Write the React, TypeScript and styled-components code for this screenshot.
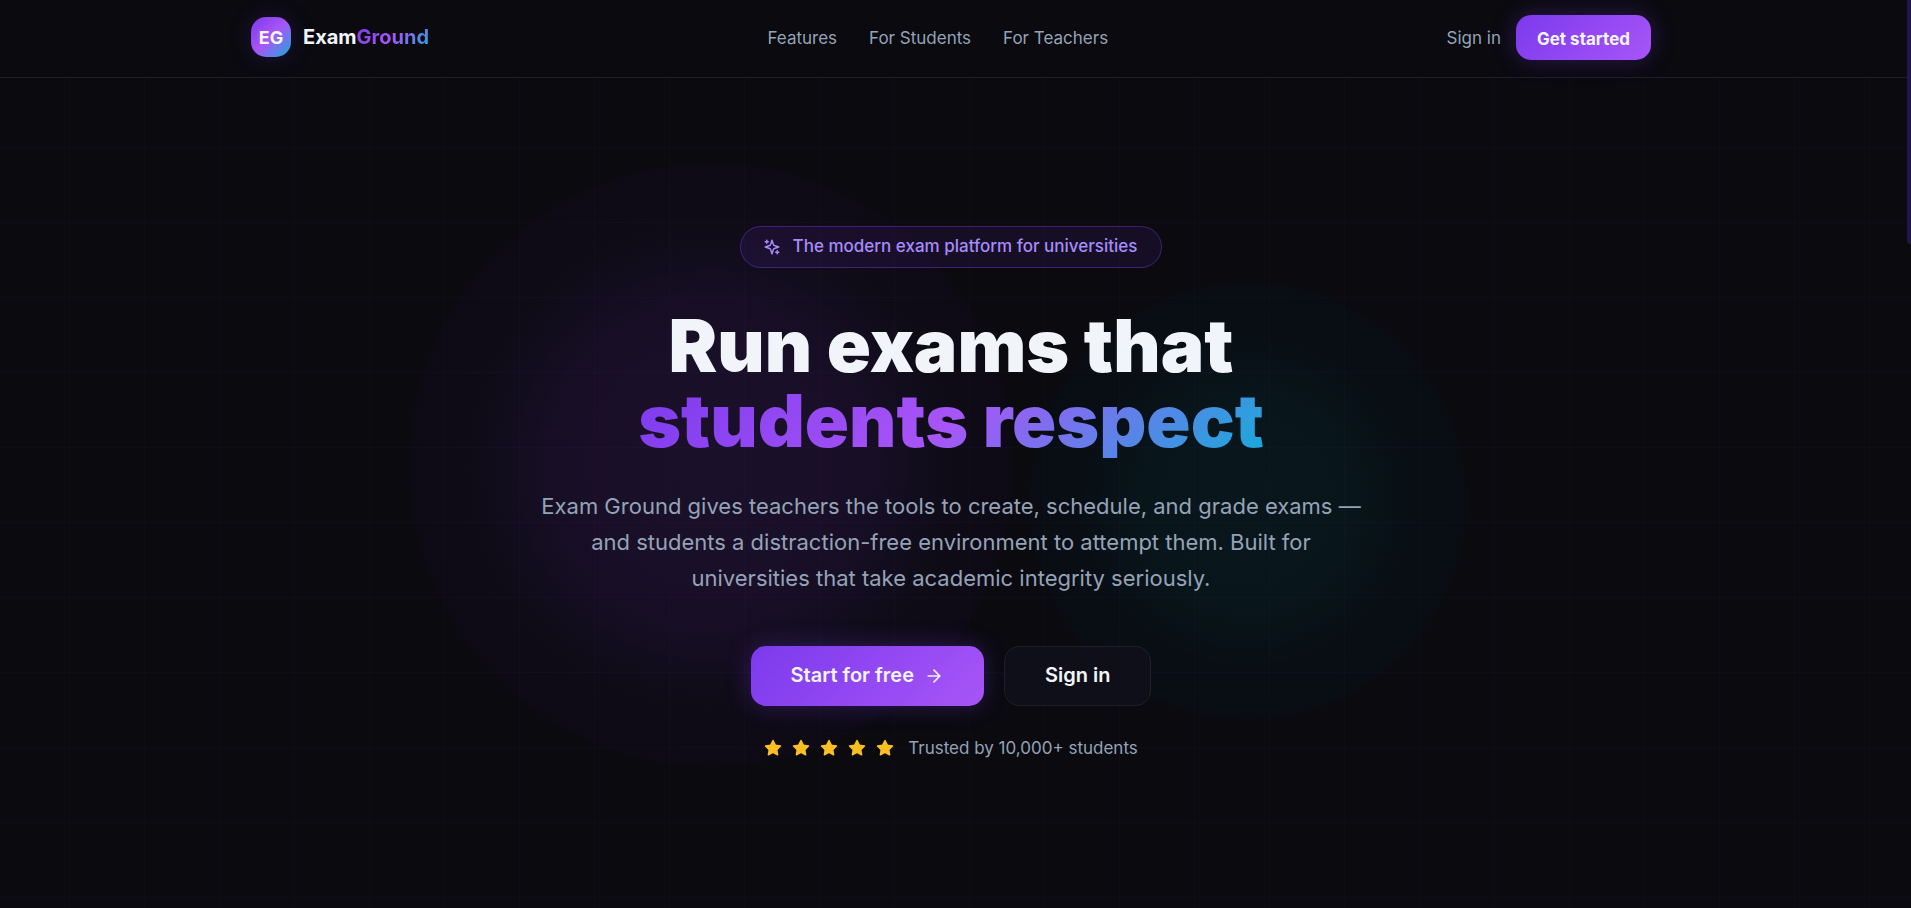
import React from "react";
import styled, { createGlobalStyle, css } from "styled-components";

const ink = "#f1f5f9";
const muted = "#94a3b8";
const violet = "linear-gradient(135deg, #7c3aed 0%, #a855f7 100%)";
const spectrum = "linear-gradient(135deg, #7c3aed 0%, #a855f7 50%, #18abda 100%)";

const GlobalStyle = createGlobalStyle`
  *, *::before, *::after { box-sizing: border-box; }
  html, body { margin: 0; background: #0a0a0f; }
  body {
    color: ${ink};
    font-family: Inter, "Liberation Sans", sans-serif;
    font-size: 17px;
    line-height: 25px;
    overflow-x: hidden;
  }
  a { color: inherit; text-decoration: none; }
`;

const Page = styled.div`
  position: relative;
  display: flex;
  flex-direction: column;
  min-height: 100vh;
  background: #0a0a0f;
`;

const ScrollThumb = styled.div`
  position: absolute;
  z-index: 3;
  top: 0;
  right: 0;
  width: 4px;
  height: 244px;
  border-bottom-left-radius: 4px;
  background: #21164b;
`;

const Header = styled.header`
  position: relative;
  z-index: 2;
  padding-right: 9px;
  background: #0a0a0f;
  border-bottom: 1px solid #1e1e2e;
`;

const HeaderInner = styled.div`
  display: flex;
  align-items: center;
  justify-content: space-between;
  max-width: 1400px;
  height: 77px;
  margin: 0 auto;
  padding-bottom: 3px;
`;

const Brand = styled.a`
  display: flex;
  align-items: center;
  gap: 12px;
  font-size: 20px;
  font-weight: 700;
`;

const BrandMark = styled.span`
  display: grid;
  place-items: center;
  width: 40px;
  height: 40px;
  border-radius: 15px;
  background: ${spectrum};
  box-shadow: 0 0 25px rgba(124, 58, 237, 0.2);
  font-size: 18px;
`;

const GradientText = styled.span`
  background: ${spectrum};
  background-clip: text;
  -webkit-background-clip: text;
  color: transparent;
`;

const Nav = styled.nav`
  display: flex;
  gap: 32px;
  padding-top: 2px;
  color: ${muted};
`;

const Account = styled.div`
  display: flex;
  align-items: center;
  gap: 15px;
`;

const QuietLink = styled.a`
  padding-top: 2px;
  color: ${muted};
`;

const Button = styled.button<{ $kind: "primary" | "outline"; $size: "small" | "large" }>`
  display: inline-flex;
  align-items: center;
  justify-content: center;
  gap: 10px;
  border: 0;
  border-radius: 15px;
  color: ${ink};
  font: inherit;
  cursor: pointer;
  ${({ $size }) =>
    $size === "small"
      ? css`
          height: 45px;
          padding: 4px 21px 0;
          font-weight: 700;
        `
      : css`
          height: 60px;
          padding: 0 40px;
          font-size: 20px;
          font-weight: 600;
        `}
  ${({ $kind }) =>
    $kind === "primary"
      ? css`
          background: ${violet};
          box-shadow: 0 0 25px rgba(124, 58, 237, 0.3);
        `
      : css`
          background: #0f0f1a;
          border: 1px solid #1e1e2e;
        `}
`;

const Hero = styled.main`
  position: relative;
  z-index: 1;
  flex: 1;
  display: flex;
  flex-direction: column;
  align-items: center;
  justify-content: center;
  padding: 40px 9px 40px 0;
  text-align: center;

  &::after {
    content: "";
    position: absolute;
    z-index: -1;
    inset: 0;
    background-image:
      linear-gradient(rgba(124, 58, 237, 0.04) 1px, transparent 1px),
      linear-gradient(90deg, rgba(124, 58, 237, 0.04) 1px, transparent 1px);
    background-size: 75px 75px;
    background-position: -6px -6px;
    pointer-events: none;
  }
`;

const Glow = styled.div<{ $tone: "violet" | "cyan" }>`
  position: absolute;
  z-index: -1;
  border-radius: 50%;
  pointer-events: none;
  transform: translate(-50%, -50%);
  ${({ $tone }) =>
    $tone === "violet"
      ? css`
          top: calc(50% - 28px);
          left: calc(50% - 245px);
          width: 606px;
          height: 606px;
          background: radial-gradient(
            closest-side,
            #1a102a 0%,
            #190f28 40%,
            #160e23 56%,
            #120d1e 66%,
            #0f0c18 78%,
            #0d0a15 99%,
            transparent 100%
          );
        `
      : css`
          top: calc(50% + 8px);
          left: calc(50% + 292px);
          width: 440px;
          height: 440px;
          background: radial-gradient(
            closest-side,
            #09161c 0%,
            #08151a 48%,
            #081117 66%,
            #090e15 77%,
            #090c13 99%,
            transparent 100%
          );
        `}
`;

const Pill = styled.p`
  display: flex;
  align-items: center;
  gap: 12px;
  height: 42px;
  margin: 0 0 40px;
  padding: 0 24px 0 22px;
  border: 1px solid rgba(124, 58, 237, 0.4);
  border-radius: 21px;
  background: rgba(124, 58, 237, 0.1);
  color: #a78bfa;
  font-weight: 500;
`;

const Title = styled.h1`
  margin: 0 0 30px;
  font-size: 73px;
  font-weight: 900;
  line-height: 75px;
`;

const TitleLine = styled.span`
  display: block;
`;

const AccentLine = styled(GradientText)`
  display: table;
  margin: 0 auto;
`;

const Lead = styled.p`
  max-width: 840px;
  margin: 0 0 50px;
  color: ${muted};
  font-size: 22px;
  line-height: 36px;
`;

const Actions = styled.div`
  display: flex;
  gap: 20px;
  margin-bottom: 30px;
`;

const Trust = styled.div`
  display: flex;
  align-items: center;
  gap: 14px;
  color: ${muted};
`;

const Stars = styled.div`
  display: flex;
  gap: 10px;
`;

const Icon = styled.svg`
  display: block;
  flex: none;
  fill: none;
  stroke: currentColor;
  stroke-width: 2;
  stroke-linecap: round;
  stroke-linejoin: round;
`;

const StarIcon = styled(Icon)`
  fill: #fbbf24;
  color: #fbbf24;
`;

const Sparkles = () => (
  <Icon width="18" height="18" viewBox="0 0 24 24" aria-hidden="true">
    <path d="m12 3-1.912 5.813a2 2 0 0 1-1.275 1.275L3 12l5.813 1.912a2 2 0 0 1 1.275 1.275L12 21l1.912-5.813a2 2 0 0 1 1.275-1.275L21 12l-5.813-1.912a2 2 0 0 1-1.275-1.275L12 3Z" />
    <path d="M5 3v4M19 17v4M3 5h4M17 19h4" />
  </Icon>
);

const Arrow = () => (
  <Icon width="20" height="20" viewBox="0 0 24 24" aria-hidden="true">
    <path d="M5 12h14M12 5l7 7-7 7" />
  </Icon>
);

const Star = () => (
  <StarIcon width="18" height="18" viewBox="0 0 24 24" aria-hidden="true">
    <path d="m12 2 3.09 6.26L22 9.27l-5 4.87 1.18 6.88L12 17.77l-6.18 3.25L7 14.14 2 9.27l6.91-1.01L12 2Z" />
  </StarIcon>
);

export default function App() {
  return (
    <Page>
      <GlobalStyle />
      <ScrollThumb />
      <Header>
        <HeaderInner>
          <Brand href="#">
            <BrandMark>EG</BrandMark>
            <span>
              Exam<GradientText>Ground</GradientText>
            </span>
          </Brand>
          <Nav>
            <a href="#features">Features</a>
            <a href="#students">For Students</a>
            <a href="#teachers">For Teachers</a>
          </Nav>
          <Account>
            <QuietLink href="#signin">Sign in</QuietLink>
            <Button $kind="primary" $size="small">
              Get started
            </Button>
          </Account>
        </HeaderInner>
      </Header>
      <Hero>
        <Glow $tone="violet" />
        <Glow $tone="cyan" />
        <Pill>
          <Sparkles />
          The modern exam platform for universities
        </Pill>
        <Title>
          <TitleLine>Run exams that</TitleLine>
          <AccentLine>students respect</AccentLine>
        </Title>
        <Lead>
          Exam Ground gives teachers the tools to create, schedule, and grade exams — and students a
          distraction-free environment to attempt them. Built for universities that take academic
          integrity seriously.
        </Lead>
        <Actions>
          <Button $kind="primary" $size="large">
            Start for free
            <Arrow />
          </Button>
          <Button $kind="outline" $size="large">
            Sign in
          </Button>
        </Actions>
        <Trust>
          <Stars role="img" aria-label="5 out of 5 stars">
            {[1, 2, 3, 4, 5].map((n) => (
              <Star key={n} />
            ))}
          </Stars>
          <span>Trusted by 10,000+ students</span>
        </Trust>
      </Hero>
    </Page>
  );
}
